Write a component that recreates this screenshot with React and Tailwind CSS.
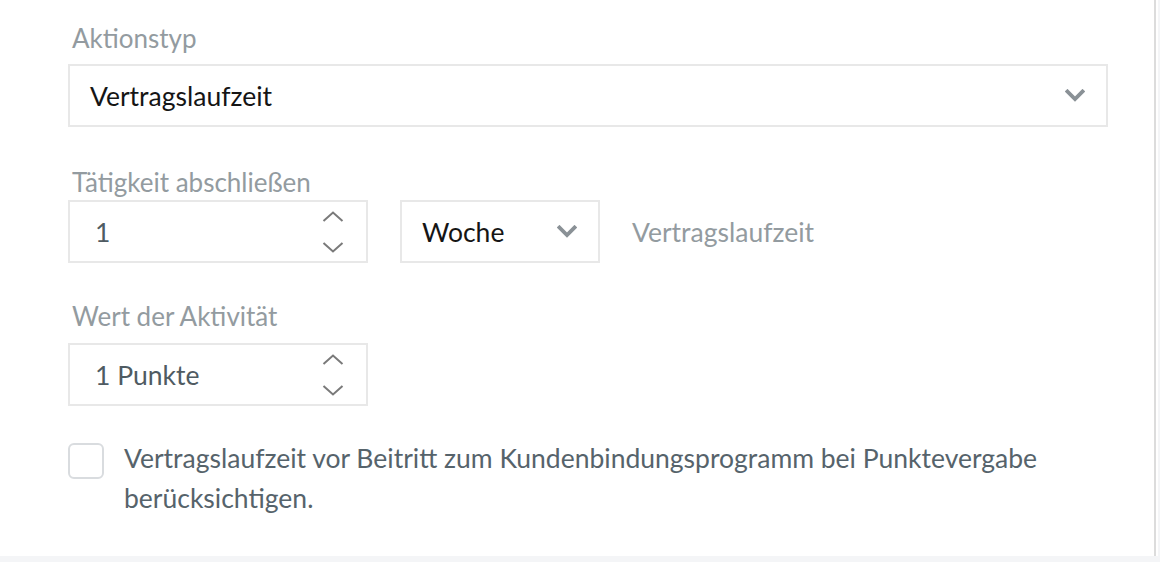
import React from "react";

const font = { fontFamily: "Lato, 'Liberation Sans', sans-serif" };

const Chevron = ({ className = "" }) => (
  <svg viewBox="0 0 20 13" className={className} fill="none">
    <path d="M2.5 2.5 L10 10 L17.5 2.5" stroke="#8a9196" strokeWidth="3.8" strokeLinecap="square" />
  </svg>
);

const Spinner = () => (
  <div className="flex flex-col items-center gap-[20px] mr-[22px]">
    <svg viewBox="0 0 22 11" className="w-[22px] h-[11px]" fill="none">
      <path d="M1.5 10 L11 1.5 L20.5 10" stroke="#7a7a7a" strokeWidth="2" />
    </svg>
    <svg viewBox="0 0 22 11" className="w-[22px] h-[11px]" fill="none">
      <path d="M1.5 1 L11 9.5 L20.5 1" stroke="#7a7a7a" strokeWidth="2" />
    </svg>
  </div>
);

const Label = ({ children, className = "" }) => (
  <div className={`pl-[4px] text-[26px] text-[#939ba0] leading-[32px] ${className}`}>{children}</div>
);

const NumberInput = ({ value }) => (
  <div className="w-[300px] h-[63px] border-2 border-[#e8e8e8] flex items-center justify-between">
    <span className="pl-[25px] text-[26.5px] leading-[32px] text-[#4f5b62]">{value}</span>
    <Spinner />
  </div>
);

export default function App() {
  return (
    <div className="w-[1160px] h-[562px] bg-[#f4f5f7] flex flex-col" style={font}>
      <div className="flex h-[556px]">
        <div className="w-[1156px] bg-white border-r-2 border-[#dcdcdc] pl-[68px] pt-[22px]">
          <Label>Aktionstyp</Label>
          <div className="mt-[10px] w-[1040px] h-[63px] border-2 border-[#e8e8e8] flex items-center justify-between">
            <span className="pl-[20px] text-[26.5px] leading-[32px] text-[#151515]">Vertragslaufzeit</span>
            <Chevron className="w-[20px] h-[13px] mr-[21px]" />
          </div>

          <Label className="mt-[39px]">Tätigkeit abschließen</Label>
          <div className="mt-[2px] flex items-center">
            <NumberInput value="1" />
            <div className="ml-[32px] w-[200px] h-[63px] border-2 border-[#e8e8e8] flex items-center justify-between">
              <span className="pl-[20px] text-[26.5px] leading-[32px] text-[#151515]">Woche</span>
              <Chevron className="w-[20px] h-[13px] mr-[21px]" />
            </div>
            <span className="ml-[32px] text-[26.5px] leading-[32px] text-[#939ba0]">Vertragslaufzeit</span>
          </div>

          <Label className="mt-[37px]">Wert der Aktivität</Label>
          <div className="mt-[11px]">
            <NumberInput value="1 Punkte" />
          </div>

          <div className="mt-[32px] flex items-start">
            <div className="mt-[5px] w-[36px] h-[36px] shrink-0 rounded-[6px] border-2 border-[#d9dcdf] bg-white" />
            <p className="ml-[20px] text-[26.5px] leading-[40px] text-[#56636b] w-[960px]">
              Vertragslaufzeit vor Beitritt zum Kundenbindungsprogramm bei Punktevergabe berücksichtigen.
            </p>
          </div>
        </div>
        <div className="w-[2px] bg-white" />
      </div>
    </div>
  );
}
